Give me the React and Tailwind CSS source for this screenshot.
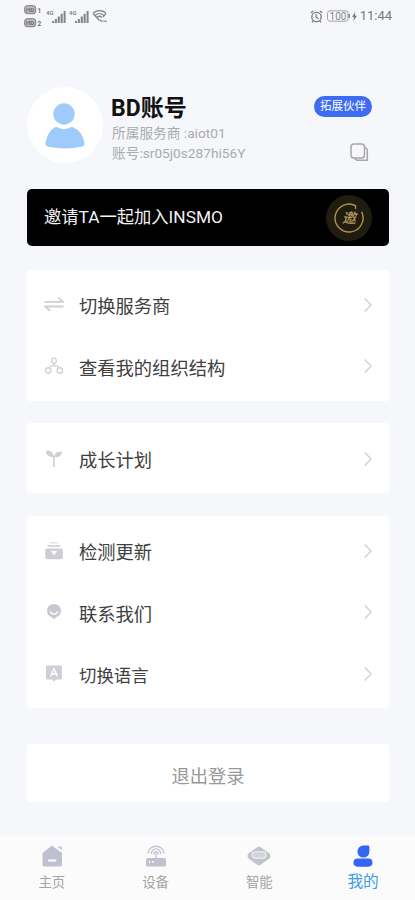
const SwapIcon = () => (
  <svg width="20" height="20" viewBox="0 0 20 20" fill="none" stroke="#cfd0d7" strokeWidth="1.8">
    <path d="M0.5 6.8H19L14 2.6" />
    <path d="M19.5 11.5H1L6 15.8" />
  </svg>
);

const OrgIcon = () => (
  <svg width="20" height="20" viewBox="0 0 20 20" fill="none" stroke="#d2d2d7" strokeWidth="1.4">
    <ellipse cx="10" cy="4.7" rx="2.3" ry="2.8" />
    <circle cx="4.2" cy="14.5" r="2.7" />
    <circle cx="15.8" cy="14.5" r="2.7" />
    <path d="M10 7.5V9.9M5.2 11.9L7 9.9H13L15 11.9" />
  </svg>
);

const SproutIcon = () => (
  <svg width="20" height="20" viewBox="0 0 20 20" fill="#cfd0d5">
    <path d="M2 2.1C6 1.2 9.3 2.8 9.6 7.9C5 8.5 2.4 6.7 2 2.1Z" />
    <path d="M18.2 2.9C13.5 2 10.6 3.8 10.2 8.1C14.6 8.5 17.4 6.9 18.2 2.9Z" />
    <path d="M9 6.7H10.7V18H9Z" />
  </svg>
);

const UpdateIcon = () => (
  <svg width="20" height="20" viewBox="0 0 20 20" fill="#cccdd5">
    <rect x="6" y="1.2" width="8" height="1.2" opacity="0.6" />
    <rect x="3.6" y="4.2" width="12.8" height="1.6" />
    <rect x="1.2" y="7.6" width="17.6" height="10.6" rx="1.8" />
    <path d="M7 10H13L10 14.6Z" fill="#fff" />
  </svg>
);

const ContactIcon = () => (
  <svg width="20" height="20" viewBox="0 0 20 20">
    <path d="M10 2C14.2 2 17 5 17 8.8C17 12 15 14.5 12.2 15.3L10 17.2L7.8 15.3C5 14.5 3 12 3 8.8C3 5 5.8 2 10 2Z" fill="#c7c9d2" />
    <path d="M6.2 9.3C7 12.8 13 12.8 13.8 9.3" fill="none" stroke="#fff" strokeWidth="1.3" />
  </svg>
);

const LanguageIcon = () => (
  <svg width="20" height="20" viewBox="0 0 20 20">
    <path d="M3.5 1.5H16.5Q18 1.5 18 3V14Q18 15.5 16.5 15.5H12L10 17.5L8 15.5H3.5Q2 15.5 2 14V3Q2 1.5 3.5 1.5Z" fill="#cfd0d7" />
    <path d="M6.5 12.5L10 4.5L13.5 12.5M7.8 10H12.2" fill="none" stroke="#fff" strokeWidth="1.3" />
  </svg>
);

const Chevron = () => (
  <svg width="8" height="16" viewBox="0 0 8 16" fill="none" stroke="#d2d2d2" strokeWidth="1.5">
    <path d="M0.8 1.5L7 8L0.8 14.5" />
  </svg>
);

const HomeIcon = () => (
  <svg width="24" height="24" viewBox="0 0 24 24" fill="#bfc1d1">
    <path d="M12 1.5L22 9V20.5Q22 22.5 20 22.5H4.5Q2.5 22.5 2.5 20.5V9Z" />
    <path d="M18 2.2H22V6.5L18 3.7Z" stroke="#fbfbfb" strokeWidth="0.6" />
    <rect x="8" y="15.5" width="8.5" height="2" rx="1" fill="#fff" />
  </svg>
);

const RouterIcon = () => (
  <svg width="24" height="24" viewBox="0 0 24 24" fill="none" stroke="#c4c5d1" strokeWidth="1.4">
    <path d="M4.3 9.5C4.3 -0.2 19.7 -0.2 19.7 9.5M7.2 10C7.2 3.2 16.8 3.2 16.8 10M9.8 10.5C9.8 6.8 14.2 6.8 14.2 10.5M12 9V14" />
    <rect x="2" y="14" width="20" height="8.5" rx="1.8" fill="#c0c1ce" stroke="none" />
    <path d="M4.8 17.8H6.3M8.2 17.8H9.7" stroke="#fff" strokeWidth="1.7" />
  </svg>
);

const SmartIcon = () => (
  <svg width="24" height="24" viewBox="0 0 24 24" fill="#c2c4cb">
    <path d="M12 2.8Q13.2 2.8 14.5 3.7L22.4 9.5Q24.6 12 22.4 14.5L14.5 20.3Q12 22 9.5 20.3L1.6 14.5Q-0.6 12 1.6 9.5L9.5 3.7Q10.8 2.8 12 2.8Z" />
    <rect x="5.2" y="7.8" width="13.6" height="6.4" rx="3" fill="#d3d4d9" stroke="#f3f3f5" strokeWidth="1.1" />
  </svg>
);

const MineIcon = () => (
  <svg width="24" height="24" viewBox="0 0 24 24" fill="#3266f5">
    <path d="M12.5 1.6H17Q18.4 1.6 18.4 3V7.4A6 6 0 1 1 12.5 1.6Z" />
    <rect x="2.5" y="14.5" width="19" height="8.2" rx="4.1" />
  </svg>
);

const Signal = () => (
  <svg width="21" height="15" viewBox="0 0 21 15" fill="#858587">
    <text x="0" y="5.8" fontSize="6" fontWeight="700" fontFamily="Roboto" textLength="7.5" lengthAdjust="spacingAndGlyphs">4G</text>
    <path d="M6 12H8V14H6ZM8.8 10H10.9V14H8.8ZM11.7 7.5H13.8V14H11.7ZM14.6 4.8H16.7V14H14.6ZM17.6 2H19.6V14H17.6Z" />
  </svg>
);

const HdBadge = ({ index }) => (
  <svg width="18" height="10" viewBox="0 0 18 10" fill="#707072">
    <rect x="0.7" y="0.7" width="11" height="8" rx="2.5" fill="#bcbcbe" stroke="#7c7c7e" />
    <text x="2" y="7" fontSize="6.2" fontWeight="700" fontFamily="Roboto">HD</text>
    <text x="13.4" y="8" fontSize="6.5" fontWeight="700" fontFamily="Roboto">{index}</text>
  </svg>
);

const StatusBar = () => (
  <div className="flex h-8 shrink-0 items-center justify-between pl-6 pr-[23px]">
    <div className="flex items-center">
      <div className="mt-px flex flex-col gap-[3px]">
        <HdBadge index="1" />
        <HdBadge index="2" />
      </div>
      <div className="ml-1 flex items-center gap-[2px]">
        <Signal />
        <Signal />
        <svg width="15" height="14" viewBox="0 0 15 14" fill="none" stroke="#858587" strokeWidth="1.2">
          <path d="M1 4.5C4 0.6 11 0.6 14 4.5M3 6.6C5.5 3.8 9.5 3.8 12 6.6M5 8.5C6.5 7 8.5 7 10 8.5M1 4.5L7.5 11.5M14 4.5L11 8" />
          <path d="M8 12H14.5M9 10.8L8 12M13.5 13.2L14.5 12" />
        </svg>
      </div>
    </div>
    <div className="flex items-center text-[#79797b]">
      <svg width="13" height="13" viewBox="0 0 13 13" fill="none" stroke="currentColor" strokeWidth="1.3">
        <circle cx="6.5" cy="7" r="4.7" />
        <path d="M0.8 2.8L3.2 0.9M12.2 2.8L9.8 0.9M6.2 4.3V7.2L8.5 8.8M3 11L2 12.3M10 11L11 12.3" />
      </svg>
      <svg className="ml-1" width="24" height="12" viewBox="0 0 24 12">
        <rect x="0.5" y="0.8" width="20.5" height="10.4" rx="2.5" fill="none" stroke="#a3a3a5" />
        <path d="M22.2 4V8" stroke="#888" strokeWidth="1.6" />
        <text x="2.5" y="9.7" fontSize="10" fontFamily="Roboto" fill="#858587" textLength="17" lengthAdjust="spacingAndGlyphs">100</text>
      </svg>
      <svg className="ml-px" width="5" height="9" viewBox="0 0 5 9" fill="currentColor">
        <path d="M3.2 0L0 5H2L1.5 9L5 3.8H3Z" />
      </svg>
      <span className="ml-[3px] text-[13px] leading-4">11:44</span>
    </div>
  </div>
);

const Profile = () => (
  <section className="mt-[54px] flex h-[78px] shrink-0 items-center pl-[27px] pr-[43px]">
    <div className="grid size-[76px] shrink-0 place-items-center rounded-full bg-white">
      <svg className="mt-px" width="40" height="46" viewBox="0 0 40 46" fill="#9fcbfa">
        <circle cx="19" cy="11" r="10.7" />
        <path d="M10 24.2Q11.5 23.5 13 24.4Q19 28 25 24.4Q26.5 23.5 28 24.2Q37 28 39.3 39Q40.3 43 36.5 43.8Q20 47 3.5 43.8Q-0.5 43 0.6 39Q3 28 10 24.2Z" />
      </svg>
    </div>
    <div className="ml-2 h-full pt-[9px]">
      <h1 className="text-[23px] font-bold leading-7 text-[#111]">BD账号</h1>
      <p className="ml-px text-[13.7px] leading-[21px] text-[#aaabad]">所属服务商 :aiot01</p>
      <p className="ml-px whitespace-nowrap text-[13.7px] leading-[19px] text-[#aaabad]">账号:sr05j0s287hi56Y</p>
    </div>
    <div className="ml-auto flex h-full w-[58px] shrink-0 flex-col">
      <span className="mt-[10px] flex h-[21px] items-center justify-center rounded-full bg-[#3d6bf2] pt-px text-[11.5px] text-white">
        拓展伙伴
      </span>
      <svg className="ml-[36px] mt-[26px]" width="19" height="19" viewBox="0 0 19 19" fill="none" stroke="#a8a8aa" strokeWidth="1.5">
        <rect x="1" y="1" width="13.5" height="14" rx="3" />
        <path d="M14.5 4L17.3 6.5V17.3H7L4 14.8" />
      </svg>
    </div>
  </section>
);

const InviteBanner = () => (
  <section className="ml-[27px] mr-[26px] mt-[25px] flex h-[57px] shrink-0 items-center justify-between rounded-[5px] bg-black px-[17px]">
    <span className="pt-px text-[17.3px] text-[#f2f2f2]">邀请TA一起加入INSMO</span>
    <div className="grid size-[46px] place-items-center rounded-full bg-[#211c10]">
      <svg className="col-start-1 row-start-1" width="30" height="30" viewBox="0 0 30 30" fill="none" stroke="#ae9253" strokeWidth="1.4">
        <path d="M21.5 6V2.6A14 14 0 1 0 27.6 8.8" />
      </svg>
      <span className="col-start-1 row-start-1 text-[14px] font-medium italic leading-none text-[#b39a5d]">邀</span>
    </div>
  </section>
);

const Row = ({ icon, label, small }) => (
  <div className="flex h-[61.5px] items-center px-[17px]">
    {icon}
    <span className={`ml-[15px] pt-1 text-[#404040] ${small ? 'text-[17.4px]' : 'text-[18.3px]'}`}>{label}</span>
    <span className="ml-auto">
      <Chevron />
    </span>
  </div>
);

const tabs = [
  { label: '主页', icon: <HomeIcon /> },
  { label: '设备', icon: <RouterIcon /> },
  { label: '智能', icon: <SmartIcon /> },
  { label: '我的', icon: <MineIcon />, active: true },
];

const TabBar = () => (
  <nav className="mt-auto grid h-16 shrink-0 grid-cols-4 bg-[#fbfbfb]">
    {tabs.map((tab) => (
      <div key={tab.label} className="flex flex-col items-center pt-2">
        {tab.icon}
        <span
          className={
            tab.active
              ? 'mt-1 text-[15.7px] leading-5 text-[#3c9de8]'
              : 'mt-[5px] text-[13.4px] leading-5 text-[#a3a3a5]'
          }
        >
          {tab.label}
        </span>
      </div>
    ))}
  </nav>
);

export default function App() {
  return (
    <div className="flex h-[900px] w-[415px] flex-col overflow-hidden bg-[#f5f7fb] font-[Roboto,'Noto_Sans_CJK_SC',sans-serif]">
      <StatusBar />
      <Profile />
      <InviteBanner />

      <section className="ml-[27px] mr-[26px] mt-6 h-[131px] shrink-0 rounded-[3px] bg-white pt-1">
        <Row icon={<SwapIcon />} label="切换服务商" />
        <Row icon={<OrgIcon />} label="查看我的组织结构" />
      </section>

      <section className="ml-[27px] mr-[26px] mt-[22px] h-[70px] shrink-0 rounded-[3px] bg-white pt-[5px]">
        <Row icon={<SproutIcon />} label="成长计划" />
      </section>

      <section className="ml-[27px] mr-[26px] mt-[23px] h-[192px] shrink-0 rounded-[3px] bg-white pt-1">
        <Row icon={<UpdateIcon />} label="检测更新" />
        <Row icon={<ContactIcon />} label="联系我们" />
        <Row icon={<LanguageIcon />} label="切换语言" small />
      </section>

      <button className="ml-[27px] mr-[26px] mt-[36px] h-[58px] shrink-0 rounded-[3px] bg-white pt-[7px] text-[18.3px] text-[#999]">
        退出登录
      </button>

      <TabBar />
    </div>
  );
}
